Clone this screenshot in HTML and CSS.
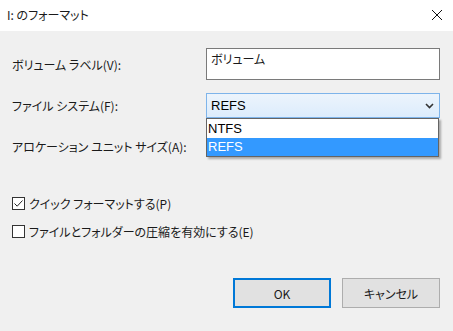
FILE: index.html
```html
<!DOCTYPE html>
<html lang="ja">
<head>
<meta charset="utf-8">
<link rel="stylesheet" href="styles.css">
</head>
<body>
<div class="window">
  <div class="titlebar">
    <span class="title">I: のフォーマット</span>
    <svg class="close" width="12" height="12" viewBox="0 0 12 12"><path d="M1 1 L11 11 M11 1 L1 11" stroke="#111" stroke-width="1" fill="none"/></svg>
  </div>
  <div class="content">
    <div class="form">
      <div class="label">ボリューム ラベル(V):</div>
      <div class="textbox">ボリューム</div>
      <div class="label">ファイル システム(F):</div>
      <div class="combo-wrap">
        <div class="combo">
          <span>REFS</span>
          <svg width="9" height="6" viewBox="0 0 9 6"><path d="M1 1 L4.5 4.5 L8 1" stroke="#333" stroke-width="1.6" fill="none"/></svg>
        </div>
        <div class="dropdown">
          <div class="option">NTFS</div>
          <div class="option selected">REFS</div>
        </div>
      </div>
      <div class="label">アロケーション ユニット サイズ(A):</div>
      <div></div>
    </div>
    <div class="checks">
      <div class="check"><span class="box"><svg width="11" height="11" viewBox="0 0 11 11"><path d="M1.5 5.5 L4.2 8.2 L9.5 2.5" stroke="#222" stroke-width="1" fill="none"/></svg></span><span>クイック フォーマットする(P)</span></div>
      <div class="check"><span class="box"></span><span>ファイルとフォルダーの圧縮を有効にする(E)</span></div>
    </div>
    <div class="buttons">
      <div class="btn default">OK</div>
      <div class="btn">キャンセル</div>
    </div>
  </div>
</div>
</body>
</html>
```
FILE: styles.css
```css
* { box-sizing: border-box; }
html, body { margin: 0; padding: 0; }
body {
  width: 453px;
  height: 331px;
  overflow: hidden;
  font-family: "Noto Sans CJK JP", "Noto Sans", sans-serif;
  font-size: 12px;
  font-feature-settings: "palt";
  color: #1a1a1a;
  background: #f0f0f0;
}
.window { width: 453px; height: 331px; display: flex; flex-direction: column; }
.titlebar {
  height: 31px;
  background: #fff;
  display: flex;
  align-items: center;
  justify-content: space-between;
  padding: 0 10px 2px 7px;
}
.title { font-size: 12px; }
.close { display: block; }
.content { flex: 1; padding: 17px 13px 0 12px; }
.form {
  display: grid;
  grid-template-columns: 194px 234px;
  grid-template-rows: 32px 25px 30px;
  row-gap: 13px;
}
.label { display: flex; align-items: center; }
.textbox {
  border: 1px solid #7a7a7a;
  background: #fff;
  padding: 2px 4px;
  line-height: 16px;
}
.combo-wrap { position: relative; }
.combo {
  height: 25px;
  border: 1px solid #7eb4ea;
  background: linear-gradient(#ecf4fc, #dcecfc);
  display: flex;
  align-items: center;
  justify-content: space-between;
  padding: 0 5px 0 4px;
  font-family: "Liberation Sans", sans-serif;
  font-size: 13px;
  color: #000;
}
.dropdown {
  position: absolute;
  left: 0;
  top: 25px;
  width: 233px;
  border: 1px solid #646464;
  background: #fff;
  box-shadow: 2px 2px 2px rgba(0,0,0,0.3);
  font-family: "Liberation Sans", sans-serif;
  font-size: 13px;
  color: #000;
  padding-top: 1px;
}
.option { height: 18px; line-height: 18px; padding-left: 1px; }
.option.selected { background: #3399ff; color: #fff; }
.checks { margin-top: 33px; display: flex; flex-direction: column; gap: 10px; }
.check { height: 18px; display: flex; align-items: center; gap: 4px; }
.box {
  width: 13px; height: 13px;
  border: 1px solid #333;
  background: #fff;
  display: flex; align-items: center; justify-content: center;
}
.box svg { display: block; }
.buttons { margin-top: 38px; display: flex; justify-content: flex-end; gap: 11px; }
.btn {
  width: 98px; height: 30px;
  background: #e1e1e1;
  border: 1px solid #adadad;
  display: flex; align-items: center; justify-content: center;
}
.btn.default { border: 2px solid #0078d7; }
```
